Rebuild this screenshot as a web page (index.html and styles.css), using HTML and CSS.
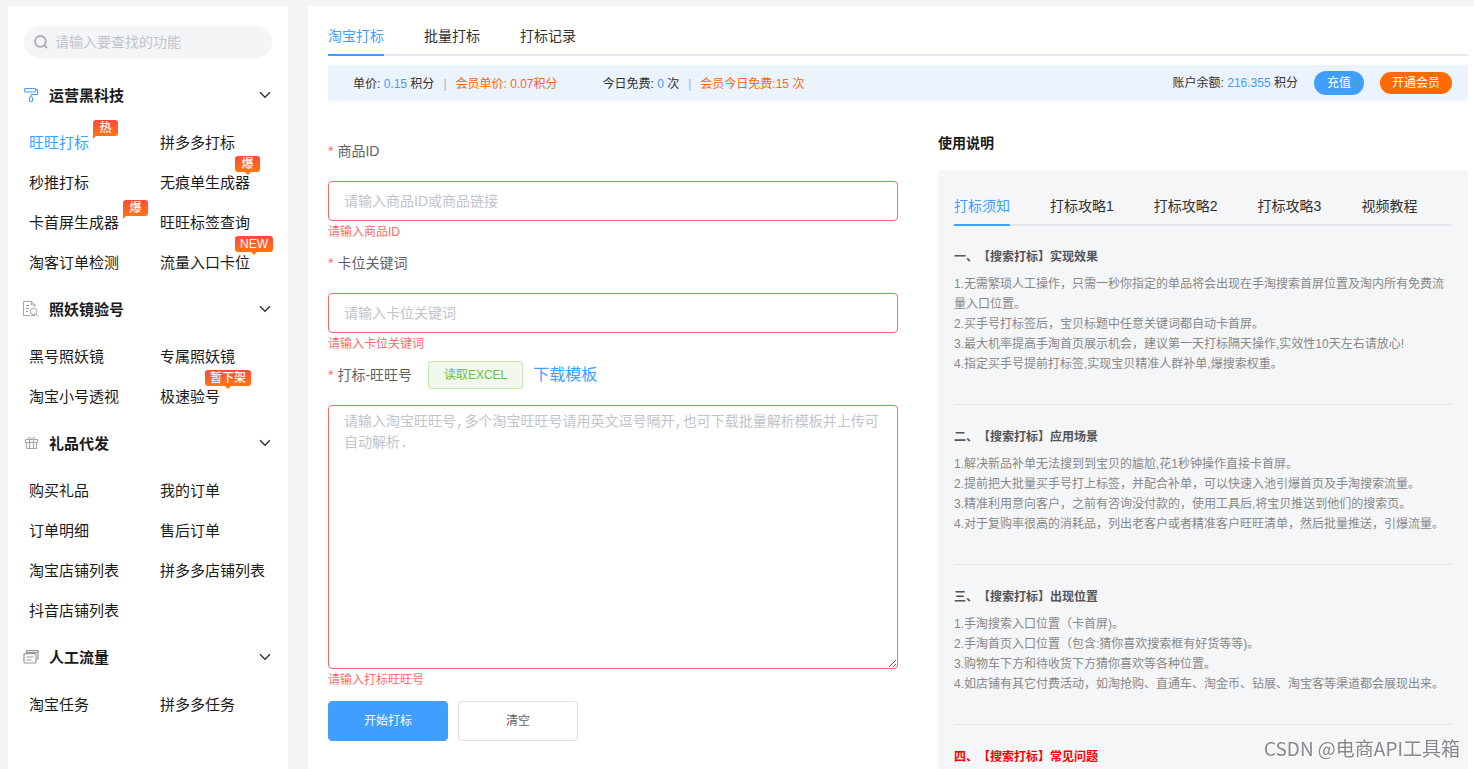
FILE: index.html
```html
<!DOCTYPE html>
<html lang="zh-CN">
<head>
<meta charset="utf-8">
<meta name="viewport" content="width=device-width, initial-scale=1">
<title>淘宝打标</title>
<link rel="stylesheet" href="styles.css">
</head>
<body>
<svg class="sprite" aria-hidden="true">
  <symbol id="chevron" viewBox="0 0 12 8"><path d="M1 1.2 6 6.2 11 1.2" fill="none" stroke="#303133" stroke-width="1.4"/></symbol>
</svg>
<div class="layout">
  <aside class="sidebar">
    <label class="search">
      <svg width="14" height="14" viewBox="0 0 14 14" fill="none" stroke="#a9adb5" stroke-width="1.8"><circle cx="6.4" cy="6.4" r="5.4"/><path d="M10.2 10.2 13 13"/></svg>
      <input type="text" placeholder="请输入要查找的功能" aria-label="查找功能">
    </label>
    <nav>
      <section>
        <button class="group" type="button">
          <svg class="group-icon" viewBox="0 0 16 16" fill="none" stroke="#409eff" stroke-width="1"><rect x="1.5" y="1.5" width="11" height="3.5" rx=".5"/><path d="M12.500 2.500H14.500V7.500H8V10"/><rect x="6.500" y="10" width="3" height="4.500" rx=".5"/></svg>
          <span>运营黑科技</span><svg class="chevron"><use href="#chevron"/></svg>
        </button>
        <ul class="links">
          <li><a class="active" href="#">旺旺打标<span class="badge side">热</span></a></li>
          <li><a href="#">拼多多打标</a></li>
          <li><a href="#">秒推打标</a></li>
          <li><a href="#">无痕单生成器<span class="badge">爆</span></a></li>
          <li><a href="#">卡首屏生成器<span class="badge side">爆</span></a></li>
          <li><a href="#">旺旺标签查询</a></li>
          <li><a href="#">淘客订单检测</a></li>
          <li><a href="#">流量入口卡位<span class="badge">NEW</span></a></li>
        </ul>
      </section>
      <section>
        <button class="group" type="button">
          <svg class="group-icon" viewBox="0 0 16 16" fill="none" stroke="#a5a5a5" stroke-width="1"><path d="M7 14.500H.5V.5H8.500L12 4V6M8.500.5V4H12M3 4.500H6M3 7.500H6M3 10.500H5"/><circle cx="10.500" cy="10.500" r="3.300"/><path d="M13 13 15.500 15.500M8.500 14.500H12"/></svg>
          <span>照妖镜验号</span><svg class="chevron"><use href="#chevron"/></svg>
        </button>
        <ul class="links">
          <li><a href="#">黑号照妖镜</a></li>
          <li><a href="#">专属照妖镜</a></li>
          <li><a href="#">淘宝小号透视</a></li>
          <li><a href="#">极速验号<span class="badge">暂下架</span></a></li>
        </ul>
      </section>
      <section>
        <button class="group" type="button">
          <svg class="group-icon" viewBox="0 0 16 16" fill="none" stroke="#a5a5a5" stroke-width="1"><path d="M3.500 7.500V13.500H13.500V7.500M2.500 4.500H14.500V7.500H2.500ZM6.500 4.500V13.500M10.500 4.500V13.500M8.500 4.500C7 1 4.500 1.500 5.500 4.500M8.500 4.500C10 1 12.500 1.500 11.500 4.500"/></svg>
          <span>礼品代发</span><svg class="chevron"><use href="#chevron"/></svg>
        </button>
        <ul class="links">
          <li><a href="#">购买礼品</a></li>
          <li><a href="#">我的订单</a></li>
          <li><a href="#">订单明细</a></li>
          <li><a href="#">售后订单</a></li>
          <li><a href="#">淘宝店铺列表</a></li>
          <li><a href="#">拼多多店铺列表</a></li>
          <li><a href="#">抖音店铺列表</a></li>
        </ul>
      </section>
      <section>
        <button class="group" type="button">
          <svg class="group-icon" viewBox="0 0 16 16" fill="none" stroke="#999" stroke-width="1.200"><path d="M3.500 4.500V1.600H15V10H13M4 3.500H15"/><rect x="1" y="4.600" width="12" height="9.400" rx="1"/><path d="M3.500 8H10.500M3.500 11H8.500"/></svg>
          <span>人工流量</span><svg class="chevron"><use href="#chevron"/></svg>
        </button>
        <ul class="links">
          <li><a href="#">淘宝任务</a></li>
          <li><a href="#">拼多多任务</a></li>
        </ul>
      </section>
    </nav>
  </aside>

  <main class="main">
    <div class="tabs" role="tablist">
      <button class="tab active" type="button" role="tab" aria-selected="true">淘宝打标</button>
      <button class="tab" type="button" role="tab">批量打标</button>
      <button class="tab" type="button" role="tab">打标记录</button>
    </div>
    <div class="account">
      <div class="price"><span>单价: <b>0.15</b> 积分</span><i>|</i><span class="vip">会员单价: 0.07积分</span></div>
      <div class="price"><span>今日免费: <b>0</b> 次</span><i>|</i><span class="vip">会员今日免费:15 次</span></div>
      <div class="balance">
        <span class="amount">账户余额: <b>216.355</b> 积分</span>
        <button class="recharge" type="button">充值</button>
        <button class="join" type="button">开通会员</button>
      </div>
    </div>

    <div class="columns">
      <form class="form">
        <label class="label" for="goods">商品ID</label>
        <input class="field" id="goods" type="text" placeholder="请输入商品ID或商品链接">
        <p class="error">请输入商品ID</p>
        <label class="label" for="keyword">卡位关键词</label>
        <input class="field" id="keyword" type="text" placeholder="请输入卡位关键词">
        <p class="error">请输入卡位关键词</p>
        <div class="label-row">
          <label class="label" for="accounts">打标-旺旺号</label>
          <button class="excel" type="button">读取EXCEL</button>
          <a class="template" href="#">下载模板</a>
        </div>
        <textarea class="field area" id="accounts" placeholder="请输入淘宝旺旺号,多个淘宝旺旺号请用英文逗号隔开,也可下载批量解析模板并上传可自动解析."></textarea>
        <p class="error">请输入打标旺旺号</p>
        <div class="actions">
          <button class="action primary" type="button">开始打标</button>
          <button class="action" type="reset">清空</button>
        </div>
      </form>

      <section class="guide">
        <h2>使用说明</h2>
        <div class="panel">
          <div class="tabs" role="tablist">
            <button class="tab active" type="button" role="tab" aria-selected="true">打标须知</button>
            <button class="tab" type="button" role="tab">打标攻略1</button>
            <button class="tab" type="button" role="tab">打标攻略2</button>
            <button class="tab" type="button" role="tab">打标攻略3</button>
            <button class="tab" type="button" role="tab">视频教程</button>
          </div>
          <article>
            <h3>一、【搜索打标】实现效果</h3>
            <p>1.无需繁琐人工操作，只需一秒你指定的单品将会出现在手淘搜索首屏位置及淘内所有免费流量入口位置。</p>
            <p>2.买手号打标签后，宝贝标题中任意关键词都自动卡首屏。</p>
            <p>3.最大机率提高手淘首页展示机会，建议第一天打标隔天操作,实效性10天左右请放心!</p>
            <p>4.指定买手号提前打标签,实现宝贝精准人群补单,爆搜索权重。</p>
          </article>
          <article>
            <h3>二、【搜索打标】应用场景</h3>
            <p>1.解决新品补单无法搜到到宝贝的尴尬,花1秒钟操作直接卡首屏。</p>
            <p>2.提前把大批量买手号打上标签，并配合补单，可以快速入池引爆首页及手淘搜索流量。</p>
            <p>3.精准利用意向客户，之前有咨询没付款的，使用工具后,将宝贝推送到他们的搜索页。</p>
            <p>4.对于复购率很高的消耗品，列出老客户或者精准客户旺旺清单，然后批量推送，引爆流量。</p>
          </article>
          <article>
            <h3>三、【搜索打标】出现位置</h3>
            <p>1.手淘搜索入口位置（卡首屏)。</p>
            <p>2.手淘首页入口位置（包含:猜你喜欢搜索框有好货等等)。</p>
            <p>3.购物车下方和待收货下方猜你喜欢等各种位置。</p>
            <p>4.如店铺有其它付费活动，如淘抢购、直通车、淘金币、钻展、淘宝客等渠道都会展现出来。</p>
          </article>
          <article class="faq">
            <h3>四、【搜索打标】常见问题</h3>
          </article>
        </div>
      </section>
    </div>
  </main>
</div>
<div class="watermark">CSDN @电商API工具箱</div>
</body>
</html>
```
FILE: styles.css
```css
* { box-sizing: border-box; }
body {
  margin: 0;
  background: #f4f4f4;
  color: #303133;
  font: 14px/20px "Liberation Sans", "Noto Sans CJK SC", sans-serif;
  text-spacing-trim: space-all;
}
button, input { font: inherit; color: inherit; }
button { margin: 0; padding: 0; border: 0; background: none; cursor: pointer; }
a { color: inherit; text-decoration: none; }
h2, h3, p, ul { margin: 0; padding: 0; }
.sprite { position: absolute; width: 0; height: 0; }

.layout {
  display: flex;
  gap: 20px;
  min-height: 100vh;
  padding: 6px 0 0 8px;
}

/* Sidebar */
.sidebar { flex: 0 0 280px; padding: 20px 16px 0; background: #fff; }
.search {
  display: flex;
  align-items: center;
  gap: 7px;
  height: 32px;
  margin-bottom: 10px;
  padding: 0 10px;
  border-radius: 16px;
  background: #f4f5f7;
}
.search input { flex: 1; min-width: 0; padding: 0; border: 0; outline: 0; background: none; }
::placeholder { color: #c0c4cc; opacity: 1; }
.group {
  display: flex;
  align-items: center;
  width: 100%;
  height: 54px;
  color: #1a1a1a;
  font-size: 15px;
  font-weight: 700;
  line-height: 22px;
}
.group span { padding-top: 2px; }
.group-icon { width: 16px; height: 16px; margin: 0 10px 0 -1px; }
.chevron { width: 12px; height: 8px; margin: 0 1px 0 auto; }
.links {
  display: grid;
  grid-template-columns: 131px 1fr;
  padding-left: 5px;
  list-style: none;
  color: #1a1a1a;
  font-size: 15px;
  line-height: 38px;
  white-space: nowrap;
}
.links a { position: relative; display: block; width: fit-content; padding-top: 2px; }
.links .active { color: #409eff; }
.badge {
  position: absolute;
  top: -6px;
  left: calc(100% - 15px);
  min-width: 25px;
  height: 16px;
  padding: 0 5px;
  border-radius: 3px;
  background: linear-gradient(#ff4a3a, #ff7610);
  color: #fff;
  font-size: 12px;
  font-weight: 500;
  line-height: 17px;
  text-align: center;
}
.badge::after {
  content: "";
  position: absolute;
  top: 100%;
  left: calc(50% - 3px);
  border: 3px solid transparent;
  border-top-color: #ff7610;
  border-bottom: 0;
}
.badge.side { top: -2px; left: calc(100% + 4px); border-bottom-left-radius: 0; }
.badge.side::after { left: 0; border-left: 0; }

/* Main area */
.main { display: flex; flex: 1; flex-direction: column; min-width: 0; padding: 10px 6px 0 20px; background: #fff; }
.tabs { display: flex; gap: 40px; box-shadow: inset 0 -2px #e4e7ed; }
.tab { height: 40px; line-height: 40px; white-space: nowrap; }
.tab.active { color: #409eff; box-shadow: inset 0 -2px #409eff; }
.account {
  display: flex;
  align-items: center;
  gap: 45px;
  height: 36px;
  margin-top: 9px;
  padding: 0 16px 0 25px;
  background: #ebf3ff;
  font-size: 12px;
  white-space: nowrap;
}
.account b { color: #409eff; font-weight: 400; }
.price { display: flex; gap: 9px; padding-top: 2px; }
.price i { color: #a3adc0; font-style: normal; }
.vip { color: #ff6a00; }
.balance { display: flex; align-items: center; gap: 16px; margin-left: auto; }
.recharge, .join { color: #fff; border-radius: 12px; }
.recharge { width: 50px; height: 24px; background: #409eff; }
.join { width: 72px; height: 22px; background: #ff6a00; }
.columns { display: grid; flex: 1; grid-template-columns: 1fr 1fr; padding-top: 30px; }

/* Form */
.label { display: block; margin-bottom: 10px; color: #606266; line-height: 40px; }
.label::before { content: "*"; margin-right: 4px; color: #f56c6c; }
.label-row { display: flex; align-items: center; margin-bottom: 10px; }
.label-row .label { margin-bottom: 0; }
.excel {
  width: 95px;
  height: 28px;
  margin: 0 10px 0 16px;
  border: 1px solid #c2e7b0;
  border-radius: 3px;
  background: #f0f9eb;
  color: #67c23a;
  font-size: 12px;
}
.template { color: #409eff; font-size: 16px; }
.field {
  display: block;
  width: 100%;
  height: 40px;
  padding: 0 15px;
  border: 1px solid #f56c6c;
  border-radius: 4px;
  background: #fff;
  outline: 0;
}
.area {
  height: 264px;
  padding: 6px 15px;
  font: 14px/21px "Liberation Mono", "Noto Sans CJK SC", monospace;
  resize: vertical;
}
.error { padding: 5px 0; color: #f56c6c; font-size: 12px; line-height: 12px; }
.actions { display: flex; gap: 10px; padding-top: 10px; }
.action {
  width: 120px;
  height: 40px;
  border: 1px solid #dcdfe6;
  border-radius: 4px;
  background: #fff;
  color: #606266;
  font-size: 12px;
}
.action.primary { border-color: #409eff; background: #409eff; color: #fff; }

/* Guide */
.guide { display: flex; flex-direction: column; padding: 2px 0 0 40px; }
.guide h2 { margin-bottom: 17px; color: #1a1a1a; font-size: 14px; }
.panel { flex: 1; padding: 16px 16px 0; border-radius: 4px 4px 0 0; background: #f4f6f8; }
article { padding: 21px 0 30px; color: #888; font-size: 12px; }
article + article { padding-top: 22px; border-top: 1px solid #e2e4e8; }
article h3 { margin-bottom: 7px; color: #555; font-size: 12px; }
article.faq { padding-bottom: 0; }
.faq h3 { margin-bottom: 0; color: #f00; }

.watermark {
  position: fixed;
  right: 14px;
  bottom: 7px;
  color: #85888c;
  font: 19px/28px "Noto Sans CJK SC", sans-serif;
  text-shadow: 1px 1px #fff;
}
```
